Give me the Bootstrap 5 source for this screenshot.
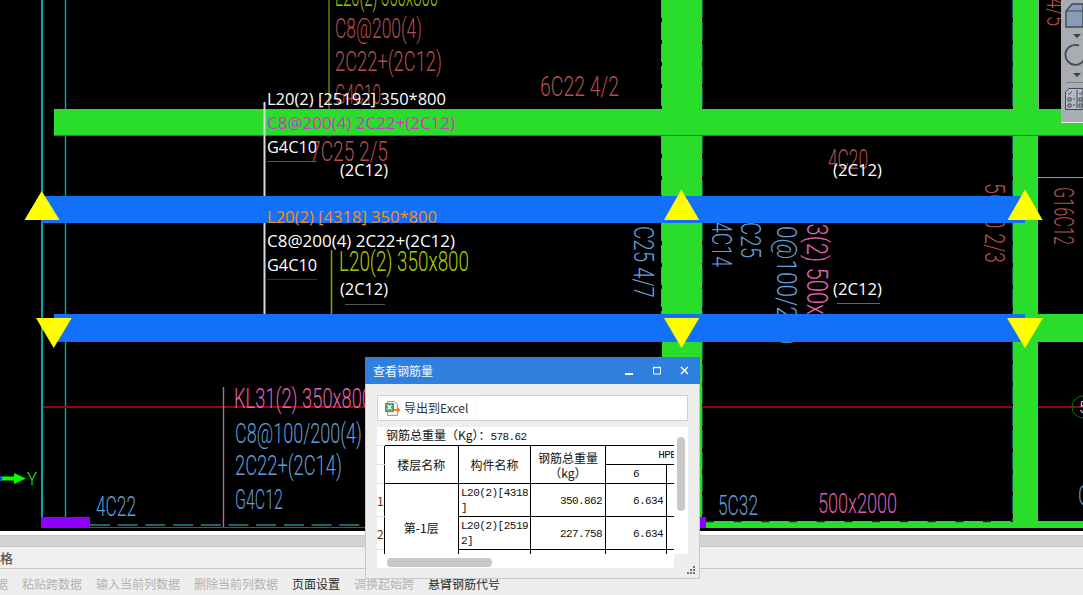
<!DOCTYPE html>
<html lang="zh-CN">
<head>
<meta charset="UTF-8">
<title>查看钢筋量</title>
<link href="https://cdn.jsdelivr.net/npm/bootstrap@5.3.2/dist/css/bootstrap.min.css" rel="stylesheet">
<style>
  html, body { height: 595px; overflow: hidden; background: #eee; }
  .app-page { width: 1083px; height: 595px; overflow: hidden; font-family: "Noto Sans CJK SC", sans-serif; font-size: 12px; }
  .cad-view { display: block; width: 1083px; height: 531px; background: #000; }
  .cad-view text { font-family: Roboto, "Liberation Sans", sans-serif; font-weight: 300; }
  .cad-view .lbl { font-family: "Open Sans", sans-serif; font-size: 16px; font-weight: 400; }

  .strip-white { height: 4px; background: #fff; }
  .strip-title { height: 12px; background: #d2d3d6; border-top: 1px solid #c6c8cb; border-bottom: 1px solid #c3c5c8; }
  .strip-tab { height: 22px; line-height: 21px; background: #efefef; border-bottom: 1px solid #c8c9cc; color: #555; font-size: 13px; font-weight: 500; }
  .strip-tools { height: 26px; gap: 14px; margin-left: -4px; padding-top: 5px; line-height: 20px; color: #b3b3b3; }
  .strip-tools .on { color: #2b2b2b; }

  .steel-dlg { left: 365px; top: 357px; width: 335px; height: 222px; background: #eee; border: 1px solid #c2cad3; border-top: 0; }
  .steel-head { height: 27px; margin: 0 -1px; padding: 0 10px 0 8px; background: #2e7fde; color: #f4f8fd; font-size: 12px; }
  .steel-bar { height: 26px; margin: 11px 11px 6px 11px; padding-left: 1px; background: #fff; border: 1px solid #cfd2d4; }
  .steel-btn { height: 22px; padding: 0 8px 0 4px; gap: 3px; font-size: 12px; color: #333; border: 1px solid #f7f7f7; border-radius: 2px; }
  .steel-grid { height: 141px; margin: 0 11px; width: 311px; }
  .steel-sheet { width: 297px; height: 127px; overflow: hidden; background: #fff; }
  .steel-vgut { width: 14px; height: 127px; background: #fff; padding: 10px 0 0 3px; }
  .steel-vthumb { width: 8px; height: 74px; background: #c8c8c8; border-radius: 4px; }
  .steel-hgut { width: 297px; height: 14px; background: #fff; padding: 4px 0 0 10px; }
  .steel-hthumb { width: 105px; height: 9px; background: #c8c8c8; border-radius: 4px; }

  .steel-table { table-layout: fixed; width: 370px; border-collapse: collapse; font-family: "Noto Sans CJK SC", sans-serif; font-size: 12px; color: #111; line-height: 15px; }
  .steel-table td { border: 1px solid #000; padding: 0; text-align: center; vertical-align: middle; overflow: hidden; }
  .steel-table .rn { border: 0; border-bottom: 1px solid #ddd; color: #7a2e00; text-align: left; white-space: nowrap; }
  .steel-table .ttl { border: 0; border-bottom: 1px solid #000; padding-left: 2px; text-align: left; white-space: nowrap; }
  .steel-table .mono { font-family: "Liberation Mono", monospace; font-size: 11px; letter-spacing: -.6px; }
  .steel-table .num { text-align: right; padding: 2px 3px 0 0; font-family: "Liberation Mono", monospace; font-size: 11px; letter-spacing: -.6px; }
  .steel-table .cmp { text-align: left; padding: 1px 0 0 2px; font-family: "Liberation Mono", monospace; font-size: 11px; letter-spacing: -.5px; word-break: break-all; line-break: anywhere; line-height: 15px; }
  .h18 { height: 18px; } .h19 { height: 19px; } .h33 { height: 33px; } .h22 { height: 22px; }
  .c-rn { width: 7px; } .c-fl { width: 74.5px; } .c-el { width: 72px; } .c-wt { width: 75px; } .c-a { width: 61px; } .c-b { width: 80.5px; }
  .grip { right: 3px; bottom: 3px; }
</style>
</head>
<body>
<div class="app-page position-relative">

  <svg class="cad-view" viewBox="0 0 1083 531" xmlns="http://www.w3.org/2000/svg">
    <!-- grid lines -->
    <line x1="42" y1="0" x2="42" y2="527" stroke="#0ba5a8" stroke-width="2"/>
    <line x1="65.500" y1="0" x2="65.500" y2="517" stroke="#0ba5a8" stroke-width="1.400"/>
    <line x1="43" y1="407" x2="1083" y2="407" stroke="#8c0a0a" stroke-width="2"/>
    <circle cx="1083" cy="407" r="11" fill="none" stroke="#0b7a0b"/>
    <text x="1079" y="413" fill="#eee" font-size="16">5</text>

    <!-- leader lines -->
    <line x1="329" y1="0" x2="329" y2="109" stroke="#8a9c00" stroke-width="1.200"/>
    <line x1="331.500" y1="250" x2="331.500" y2="314" stroke="#8a9c00" stroke-width="1.600"/>
    <line x1="223.500" y1="387" x2="223.500" y2="527" stroke="#b06a95" stroke-width="1.400"/>
    <line x1="1038" y1="177.500" x2="1083" y2="177.500" stroke="#a3b800"/>
    <line x1="837" y1="303.500" x2="880" y2="303.500" stroke="#666"/>
    <line x1="267" y1="161.500" x2="317" y2="161.500" stroke="#555"/>
    <line x1="267" y1="279.500" x2="317" y2="279.500" stroke="#333"/>
    <line x1="345" y1="304.500" x2="385" y2="304.500" stroke="#555"/>

    <!-- text under the beams -->
    <text x="335" y="6" fill="#a3c400" font-size="27" textLength="103" lengthAdjust="spacingAndGlyphs">L20(2) 350x800</text>
    <text x="335" y="38" fill="#b04f50" font-size="28" textLength="87" lengthAdjust="spacingAndGlyphs">C8@200(4)</text>
    <text x="335" y="71" fill="#b04f50" font-size="28" textLength="107" lengthAdjust="spacingAndGlyphs">2C22+(2C12)</text>
    <text x="335" y="104" fill="#b04f50" font-size="28" textLength="46" lengthAdjust="spacingAndGlyphs">G4C10</text>
    <text x="310" y="161" fill="#b04f50" font-size="27" textLength="78" lengthAdjust="spacingAndGlyphs">7C25 2/5</text>
    <text x="540" y="96" fill="#b04f50" font-size="27" textLength="79" lengthAdjust="spacingAndGlyphs">6C22 4/2</text>
    <text x="828" y="169" fill="#b04f50" font-size="27" textLength="40" lengthAdjust="spacingAndGlyphs">4C20</text>
    <text transform="translate(1046,0) rotate(90)" x="-2" y="-1" fill="#b04f50" font-size="25" textLength="28" lengthAdjust="spacingAndGlyphs">4/5</text>
    <text transform="translate(1054,187) rotate(90)" fill="#b04f50" font-size="27" textLength="58" lengthAdjust="spacingAndGlyphs">G16C12</text>
    <text transform="translate(985,183) rotate(90)" fill="#b04f50" font-size="27" textLength="80" lengthAdjust="spacingAndGlyphs">5C20 2/3</text>

    <text transform="translate(634,226) rotate(90)" fill="#629fd6" font-size="27" textLength="72" lengthAdjust="spacingAndGlyphs">C25 4/7</text>
    <text transform="translate(712,222) rotate(90)" fill="#629fd6" font-size="27" textLength="45" lengthAdjust="spacingAndGlyphs">4C14</text>
    <text transform="translate(741,222) rotate(90)" fill="#629fd6" font-size="27" textLength="36" lengthAdjust="spacingAndGlyphs">C25</text>
    <text transform="translate(777,226) rotate(90)" fill="#629fd6" font-size="27" textLength="118" lengthAdjust="spacingAndGlyphs">0@100/200</text>
    <text transform="translate(807,212) rotate(90)" fill="#e462b2" font-size="30" textLength="115" lengthAdjust="spacingAndGlyphs">L3(2) 500x9</text>

    <text x="234" y="408" fill="#e462b2" font-size="28" textLength="138" lengthAdjust="spacingAndGlyphs">KL31(2) 350x800</text>
    <text x="235" y="443" fill="#629fd6" font-size="28" textLength="127" lengthAdjust="spacingAndGlyphs">C8@100/200(4)</text>
    <text x="235" y="475" fill="#629fd6" font-size="28" textLength="107" lengthAdjust="spacingAndGlyphs">2C22+(2C14)</text>
    <text x="235" y="509" fill="#629fd6" font-size="28" textLength="48" lengthAdjust="spacingAndGlyphs">G4C12</text>
    <text x="96" y="516" fill="#629fd6" font-size="28" textLength="40" lengthAdjust="spacingAndGlyphs">4C22</text>
    <text x="718" y="515" fill="#629fd6" font-size="28" textLength="40" lengthAdjust="spacingAndGlyphs">5C32</text>
    <text x="818" y="513" fill="#dc5eaa" font-size="28" textLength="79" lengthAdjust="spacingAndGlyphs">500x2000</text>
    <text x="1078" y="505" fill="#629fd6" font-size="28" textLength="12" lengthAdjust="spacingAndGlyphs">C</text>
    <text x="339" y="271" fill="#a8cc00" font-size="28" textLength="130" lengthAdjust="spacingAndGlyphs">L20(2) 350x800</text>

    <!-- beams and columns -->
    <rect x="662" y="0" width="40" height="521" fill="#2bdd2b"/>
    <rect x="1013" y="0" width="25" height="521" fill="#2bdd2b"/>
    <rect x="54" y="109" width="1029" height="27" fill="#2bdd2b"/>
    <line x1="54" y1="135.500" x2="1083" y2="135.500" stroke="#1d8a1d"/>
    <rect x="1025" y="314" width="58" height="28" fill="#2bdd2b"/>
    <rect x="706" y="521" width="377" height="7" fill="#2bdd2b"/>
    <line x1="90" y1="527.500" x2="365" y2="527.500" stroke="#1b7a1b"/>
    <line x1="90" y1="525" x2="365" y2="525" stroke="#27d4d4" stroke-dasharray="20 7.700"/>
    <line x1="706" y1="521.500" x2="1013" y2="521.500" stroke="#0d3a10" stroke-width="1.400" stroke-dasharray="8 19.700"/>

    <!-- column edges -->
    <path d="M661.500 0V109M661.500 136V195M661.500 223V314M702 0V109M702 136V195M702 223V314M702 342V516M1013 0V109M1013 136V195M1013 223V314M1013 342V521" stroke="#20b8a0" stroke-dasharray="18 4" fill="none"/>
    <line x1="1038.500" y1="0" x2="1038.500" y2="109" stroke="#999"/>

    <rect x="41" y="196" width="984" height="27" fill="#1270fa"/>
    <rect x="54" y="314" width="971" height="28" fill="#1270fa"/>
    <rect x="41" y="517" width="49" height="11" fill="#9000ff"/>
    <rect x="700" y="517" width="6" height="11" fill="#9000ff"/>

    <!-- beam label stems -->
    <line x1="264.500" y1="102" x2="264.500" y2="196" stroke="#d8d8d8" stroke-width="2"/>
    <line x1="264.500" y1="223" x2="264.500" y2="314" stroke="#d8d8d8" stroke-width="2"/>

    <!-- beam labels -->
    <text class="lbl" x="267" y="105" fill="#fff" textLength="179" lengthAdjust="spacingAndGlyphs">L20(2) [25192] 350*800</text>
    <text class="lbl" x="267" y="129" fill="#d92fd0" textLength="188" lengthAdjust="spacingAndGlyphs">C8@200(4) 2C22+(2C12)</text>
    <text class="lbl" x="267" y="153" fill="#fff" textLength="50" lengthAdjust="spacingAndGlyphs">G4C10</text>
    <text class="lbl" x="340" y="176" fill="#fff" textLength="48" lengthAdjust="spacingAndGlyphs">(2C12)</text>
    <text class="lbl" x="833" y="176" fill="#fff" textLength="49" lengthAdjust="spacingAndGlyphs">(2C12)</text>
    <text class="lbl" x="267" y="223" fill="#ff8c00" textLength="170" lengthAdjust="spacingAndGlyphs">L20(2) [4318] 350*800</text>
    <text class="lbl" x="267" y="247" fill="#fff" textLength="188" lengthAdjust="spacingAndGlyphs">C8@200(4) 2C22+(2C12)</text>
    <text class="lbl" x="267" y="271" fill="#fff" textLength="50" lengthAdjust="spacingAndGlyphs">G4C10</text>
    <text class="lbl" x="340" y="295" fill="#fff" textLength="48" lengthAdjust="spacingAndGlyphs">(2C12)</text>
    <text class="lbl" x="833" y="295" fill="#fff" textLength="49" lengthAdjust="spacingAndGlyphs">(2C12)</text>

    <!-- support triangles -->
    <polygon points="41.700,191 24.500,220 59.600,220" fill="#ff0"/>
    <polygon points="681.300,189.500 664,220 699.300,220" fill="#ff0"/>
    <polygon points="1025,189.500 1007.600,220 1042.600,220" fill="#ff0"/>
    <polygon points="36,318 71.700,318 53.700,348" fill="#ff0"/>
    <polygon points="664,318 699.300,318 681.500,348" fill="#ff0"/>
    <polygon points="1007,318 1043,318 1025,348" fill="#ff0"/>

    <!-- axis -->
    <rect x="0" y="476" width="2" height="5" fill="#1a3cff"/>
    <polygon points="2,476.500 14,476.500 14,473 26,478.500 14,484 14,480.500 2,480.500" fill="#0f0"/>
    <text x="27" y="485" fill="#0f0" font-size="19" textLength="10" lengthAdjust="spacingAndGlyphs">Y</text>

    <!-- view cube panel -->
    <rect x="1061" y="0" width="22" height="122" fill="#a9adb1"/>
    <line x1="1061" y1="122.500" x2="1083" y2="122.500" stroke="#e8e8e8"/>
    <path d="M1066 11 L1072 4 H1083 V27 H1066 Z" fill="#8a9bb8" stroke="#3f4856" stroke-width="1.400"/>
    <path d="M1066 11 H1083" stroke="#3f4856"/>
    <polygon points="1073,34 1081,34 1077,38" fill="#3a3f47"/>
    <path d="M1079 45.500 A10 10 0 1 0 1085 52" fill="none" stroke="#3f4856" stroke-width="1.800"/>
    <polygon points="1073,73 1081,73 1077,77" fill="#3a3f47"/>
    <line x1="1066" y1="82.500" x2="1083" y2="82.500" stroke="#7e8287"/>
    <path d="M1065.500 92 L1069 88.500 H1083 V109.500 H1065.500 Z" fill="#b4bac2" stroke="#3f4856"/>
    <path d="M1068 93l1.500 1.500 2-3M1068 98h3v3h-3zM1068 104h3v3h-3zM1073 99h2M1073 105h2M1077 90v18M1079 93l1.500 1.500 2-3M1079 98h3v3h-3zM1079 104h3v3h-3z" stroke="#3f4856" fill="none"/>
  </svg>

  <div class="strip-white"></div>
  <div class="strip-title"></div>
  <div class="strip-tab">格</div>
  <div class="strip-tools d-flex text-nowrap">
    <span>据</span><span>粘贴跨数据</span><span>输入当前列数据</span><span>删除当前列数据</span>
    <span class="on">页面设置</span><span>调换起始跨</span><span class="on">悬臂钢筋代号</span>
  </div>

  <!-- floating window -->
  <div class="steel-dlg position-absolute d-flex flex-column">
    <div class="steel-head d-flex align-items-center justify-content-between">
      <span>查看钢筋量</span>
      <span class="d-flex align-items-center">
        <svg width="66" height="12" viewBox="0 0 66 12">
          <rect x="1" y="8" width="8" height="2" fill="#fff"/>
          <path d="M29.500 2.500h7v6.500h-7z" fill="none" stroke="#fff"/><path d="M29 2.500h8" stroke="#fff" stroke-width="1.400"/>
          <path d="M57 2l7 7M64 2l-7 7" stroke="#fff" stroke-width="1.400"/>
        </svg>
      </span>
    </div>
    <div class="steel-bar d-flex align-items-center">
      <div class="steel-btn d-flex align-items-center">
        <svg width="17" height="17" viewBox="0 0 17 17">
          <path d="M3.500 1.500h7l3 3v11h-10z" fill="#f4f4f4" stroke="#9a9a9a"/>
          <rect x="1" y="3" width="9" height="9" fill="#4aa564"/>
          <path d="M3.500 5l4 4.500M7.500 5l-4 4.500" stroke="#fff" stroke-width="1.200"/>
          <path d="M10 9h3V6.500l3.500 3.500L13 13.500V11h-3z" fill="#f08020"/>
        </svg>
        <span>导出到Excel</span>
      </div>
    </div>
    <div class="steel-grid d-flex flex-wrap">
      <div class="steel-sheet">
        <table class="steel-table">
          <colgroup><col class="c-rn"><col class="c-fl"><col class="c-el"><col class="c-wt"><col class="c-a"><col class="c-b"></colgroup>
          <tr class="h18"><td class="rn"></td><td class="ttl" colspan="5">钢筋总重量（Kg）：<span class="mono">578.62</span></td></tr>
          <tr class="h19"><td class="rn"></td><td rowspan="2">楼层名称</td><td rowspan="2">构件名称</td><td rowspan="2">钢筋总重量<br>（kg）</td><td colspan="2" class="mono">HPB300</td></tr>
          <tr class="h19"><td class="rn"></td><td class="mono">6</td><td class="mono">8</td></tr>
          <tr class="h33"><td class="rn">1</td><td rowspan="3">第-1层</td><td class="cmp">L20(2)[4318]</td><td class="num">350.862</td><td class="num">6.634</td><td class="num"></td></tr>
          <tr class="h33"><td class="rn">2</td><td class="cmp">L20(2)[25192]</td><td class="num">227.758</td><td class="num">6.634</td><td class="num"></td></tr>
          <tr class="h22"><td class="rn"></td><td class="cmp"></td><td class="num"></td><td class="num"></td><td class="num"></td></tr>
        </table>
      </div>
      <div class="steel-vgut"><div class="steel-vthumb"></div></div>
      <div class="steel-hgut"><div class="steel-hthumb"></div></div>
    </div>
    <svg class="grip position-absolute" width="10" height="10" viewBox="0 0 10 10" fill="#707478">
      <rect x="7" y="1" width="2" height="2"/><rect x="4" y="4" width="2" height="2"/><rect x="7" y="4" width="2" height="2"/>
      <rect x="1" y="7" width="2" height="2"/><rect x="4" y="7" width="2" height="2"/><rect x="7" y="7" width="2" height="2"/>
    </svg>
  </div>
</div>
<script src="https://cdn.jsdelivr.net/npm/bootstrap@5.3.2/dist/js/bootstrap.bundle.min.js"></script>
</body>
</html>
